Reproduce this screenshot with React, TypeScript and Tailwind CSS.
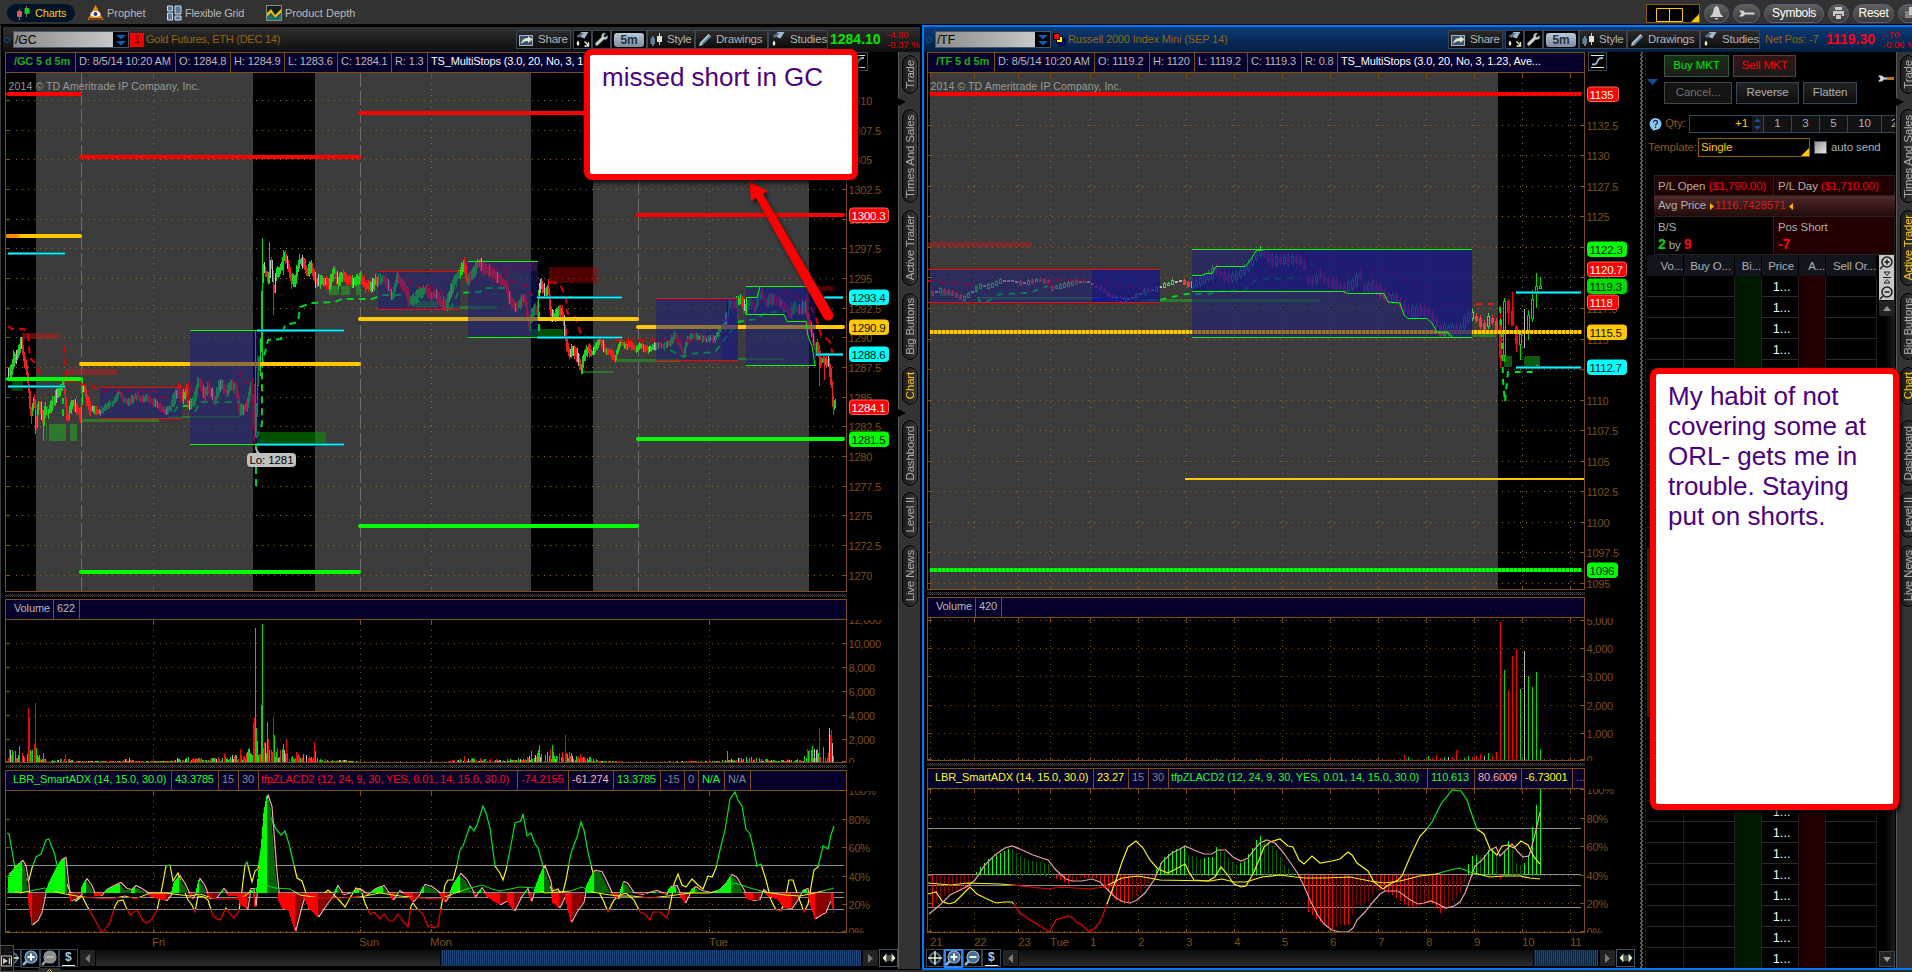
import type { ReactNode } from "react";

type Pt = [number, number];
type Seg = [number, number, number];

const GOLD = "#ffc800";
const AXIS = "#7d4f14";
const GREEN = "#00dc00";

/* ---------- helpers ---------- */

const rnd = (n: number) => {
    const v = Math.sin(n * 12.9898) * 43758.5453;
    return v - Math.floor(v);
};

const at = (pts: Pt[], x: number) => {
    if (x <= pts[0][0]) return pts[0][1];
    for (let i = 1; i < pts.length; i++) {
        if (x <= pts[i][0]) {
            const [x0, y0] = pts[i - 1];
            const [x1, y1] = pts[i];
            return y0 + ((y1 - y0) * (x - x0)) / (x1 - x0 || 1);
        }
    }
    return pts[pts.length - 1][1];
};

const line = (pts: Pt[]) => pts.map((p) => p.join(",")).join(" ");

const toPts = (s: string): Pt[] =>
    s.split(" ").map((p) => p.split(",").map(Number) as Pt);

const steps = (from: number, to: number, step: number) => {
    const out: number[] = [];
    for (let x = from; x <= to; x += step) out.push(x);
    return out;
};

/* ---------- gold chart data ---------- */

const GC_PRICE = toPts(
    "8,372 11,372 13,360 16,358 19,350 21,342 24,358 27,372 29,395 31,415 34,400 36,425 38,408 40,408 43,422 45,410 48,412 51,404 54,402 57,392 60,388 62,386 64,384 66,408 68,418 70,408 73,402 76,408 79,412 81,420 82,390 84,388 87,400 90,408 95,410 100,412 104,408 110,404 115,400 119,393 123,400 128,402 133,398 137,396 141,400 147,398 153,402 159,406 165,412 170,408 175,396 178,390 182,398 186,392 189,405 194,400 198,382 201,385 204,395 208,388 212,395 215,400 219,386 222,384 226,392 231,385 236,388 239,410 243,408 247,406 250,390 252,390 254,430 256,420 258,370 260,358 262,280 264,270 268,278 271,262 274,290 276,275 280,270 284,256 287,262 291,280 295,280 299,262 303,262 307,272 311,266 315,280 320,282 325,282 329,285 334,272 338,282 343,276 348,280 353,282 358,280 360,276 365,285 370,288 375,282 380,280 383,278 388,286 392,296 397,278 401,284 405,288 409,300 414,300 420,292 425,290 430,294 436,295 441,302 446,306 450,292 455,280 460,272 464,265 467,280 472,276 477,265 481,265 485,270 490,272 495,276 500,280 505,285 510,300 514,308 518,305 522,300 525,300 529,325 533,310 537,310 539,290 541,282 545,294 548,288 551,316 554,315 558,312 562,312 566,340 569,352 573,350 577,355 581,368 584,355 588,350 592,353 597,345 600,340 605,350 610,352 615,358 620,342 625,346 630,345 635,350 640,345 648,350 656,346 664,346 670,342 675,335 680,345 683,355 687,340 692,336 700,338 708,340 715,338 721,328 725,322 729,304 735,305 740,300 745,308 750,302 755,308 758,298 762,295 766,302 770,300 775,298 780,302 785,308 790,312 795,308 800,310 805,306 808,320 812,335 815,350 817,345 820,360 824,360 828,362 831,380 833,405 835,402"
);

const GC_ADX = toPts(
    "7,833 9,834 15,868 20,871 27,880 29,880 32,868 36,857 41,854 46,840 49,839 51,845 54,852 57,865 60,870 65,880 70,891 76,901 82,896 87,906 95,920 101,931 104,931 110,922 115,906 118,901 123,900 126,907 130,915 135,911 138,911 143,921 147,923 152,919 157,910 162,888 166,866 170,865 173,881 178,873 182,885 188,900 192,905 195,912 198,896 204,897 208,900 213,916 217,919 220,920 226,908 230,914 234,918 239,911 242,890 245,865 247,862 249,870 252,882 255,871 258,869 264,830 268,800 271,818 276,829 281,835 285,831 289,844 294,865 297,878 302,881 306,893 312,897 320,897 328,890 334,895 340,901 345,907 350,898 356,888 361,890 365,903 370,914 374,912 380,919 384,914 389,921 393,921 398,914 403,921 408,927 411,906 413,903 418,910 423,914 428,927 431,925 434,928 438,926 441,908 445,885 448,880 453,880 457,865 460,850 463,846 470,826 474,831 477,825 483,806 486,813 490,828 495,866 500,873 503,880 506,870 511,845 515,823 521,821 523,814 527,836 531,833 535,844 538,848 543,866 548,882 552,891 558,889 562,896 566,880 571,853 577,837 581,822 584,830 588,852 592,869 598,890 604,902 608,912 614,900 620,895 626,893 634,900 640,912 645,914 650,920 653,912 660,912 667,918 670,906 674,884 678,874 682,885 686,887 692,879 698,885 703,889 708,876 712,877 716,868 720,850 725,830 730,799 735,792 738,800 742,806 746,829 750,834 754,851 757,866 761,864 766,880 771,900 776,910 781,911 785,900 789,880 793,880 797,893 804,912 808,904 814,870 818,867 823,846 828,849 831,835 834,826"
);

const GC_HIST = toPts(
    "7,17 10,20 15,26 21,31 24,26 27,8 28,-10 31,-32 36,-28 40,-20 43,-6 44,0 50,14 56,26 60,32 64,34 67,6 68,-2 70,-8 75,-6 80,-2 81,6 85,13 90,6 94,-3 100,-3 105,2 112,6 119,9 125,3 130,2 134,6 140,3 146,0 150,-4 158,-6 165,-8 170,-2 173,10 178,16 183,8 188,-1 191,-6 195,0 198,13 203,6 208,-6 215,-5 222,3 228,-3 236,-3 240,-12 246,-16 249,3 252,3 254,-14 256,5 260,40 263,80 266,97 270,85 275,20 278,-8 282,-16 288,-18 294,-38 299,-18 303,-4 308,-16 317,-24 325,-12 332,-3 336,6 342,-2 350,0 358,3 366,-2 374,3 382,6 387,0 392,-7 398,1 404,-2 412,-9 418,-2 423,7 430,5 438,0 444,-9 448,-3 452,8 459,18 465,12 470,3 474,-4 480,4 486,-4 492,-8 499,-12 506,-8 513,-18 520,-4 526,3 530,-8 534,4 540,20 543,26 549,10 552,-10 558,-15 564,-3 570,-29 576,-18 582,-10 585,5 590,16 593,21 600,20 606,8 611,-2 617,-6 622,10 626,8 632,0 640,-2 655,1 665,-2 669,5 675,6 680,-4 684,-10 690,2 694,5 700,1 710,0 718,2 724,8 730,17 735,14 742,2 746,-6 752,-8 758,-7 762,2 768,-4 776,-6 783,-15 790,-16 797,-6 801,1 806,3 809,-10 814,-26 820,-22 824,-20 828,-10 830,-8 834,-24"
);

const GC_MID = toPts(
    "7,888 20,893 45,888 60,893 82,897 95,898 110,899 125,896 135,899 150,893 165,893 190,896 200,894 215,899 240,899 262,884 275,888 290,889 300,895 320,898 340,898 360,897 380,893 400,896 420,898 440,899 455,893 470,888 482,885 492,889 500,891 520,887 535,888 545,893 570,891 582,887 592,892 610,895 620,896 632,896 650,898 668,896 690,893 710,893 722,889 735,883 750,888 765,892 785,895 800,896 815,893 834,888"
);

const GC_VOL_BASE = toPts(
    "8,9 20,9 30,10 40,5 48,1 65,3 75,1 120,1 128,3 135,1 170,1 176,3 195,4 205,2 225,5 240,5 250,12 258,20 268,18 280,12 290,8 300,6 312,5 325,2 345,2 360,0 445,0 455,2 470,3 500,2 525,3 535,9 550,9 568,9 575,4 590,4 600,1 640,0 720,1 735,3 755,4 770,2 800,2 808,9 820,10 834,8"
);

// x, top y, colour
const GC_VOL_SPIKES: [number, number, string][] = [
    [9, 749, "#f00"], [19, 746, GREEN], [28, 708, "#f00"], [29, 717, "#f00"], [34, 744, "#f00"], [35, 703, "#f00"],
    [36, 748, GREEN], [43, 753, GREEN], [65, 754, "#f00"], [224, 753, "#f00"], [240, 749, "#f00"], [249, 748, GREEN],
    [253, 722, "#f00"], [254, 718, "#f00"], [255, 628, GREEN], [256, 728, GREEN], [261, 705, GREEN], [262, 624, GREEN],
    [264, 742, "#f00"], [267, 722, GREEN], [268, 740, "#f00"], [273, 717, "#f00"], [274, 735, GREEN], [283, 744, GREEN],
    [286, 740, "#f00"], [296, 752, "#f00"], [314, 742, "#f00"], [315, 751, GREEN], [464, 756, "#f00"], [531, 751, GREEN],
    [539, 745, GREEN], [550, 749, "#f00"], [552, 745, GREEN], [565, 735, "#f00"], [580, 754, "#f00"], [727, 751, GREEN],
    [807, 749, "#f00"], [812, 746, GREEN], [814, 749, "#bbb"], [819, 728, "#f00"], [823, 747, GREEN], [829, 728, "#bbb"],
    [830, 735, "#f00"], [831, 730, "#f00"], [832, 743, "#bbb"],
];

const GC_LEVELS: [string, Seg[]][] = [
    ["#ff0000", [[8, 80, 94], [81, 359, 157], [360, 640, 113], [638, 843, 215]]],
    [GOLD, [[8, 80, 236], [81, 359, 364], [360, 637, 319], [638, 843, 327]]],
    ["#00ff00", [[8, 80, 379], [81, 359, 572], [360, 637, 526], [638, 843, 439]]],
];

const GC_CYAN: Seg[] = [
    [8, 65, 253.5], [8, 65, 386.5], [257, 344, 330.5], [257, 344, 444.5], [537, 622, 297.5], [537, 622, 337.5],
    [824, 843, 297.5], [816, 843, 354.5],
];

// x, y, width, height, outline
const GC_BOXES: [number, number, number, number, string][] = [
    [100, 387, 82, 31, "#f00"], [190, 330, 70, 114, "#0f0"], [378, 271, 82, 38, "#f00"], [468, 261, 70, 76, "#0f0"],
    [656, 298, 82, 62, "#f00"], [746, 286, 70, 79, "#0f0"],
];

const GC_ZONES: [number, number, number, number, string][] = [
    [22, 333, 37, 6, "#b91e1e"], [67, 369, 50, 6, "#b91e1e"], [182, 387, 14, 6, "#b91e1e"], [463, 261, 74, 10, "#7a1e3c"],
    [549, 267, 48, 16, "#a00000"], [811, 286, 22, 5, "#a00000"], [12, 381, 11, 10, "#108c10"], [46, 424, 1, 17, "#1eb41e"],
    [49, 424, 17, 17, "#1eb41e"], [70, 424, 7, 17, "#1eb41e"], [82, 419, 77, 3, "#1eb41e"], [168, 416, 71, 2, "#1eb41e"],
    [257, 432, 69, 12, "#00a000"], [329, 286, 10, 9, "#1eb41e"], [341, 286, 9, 9, "#1eb41e"], [356, 286, 5, 9, "#1eb41e"],
    [413, 301, 25, 7, "#1eb41e"], [448, 306, 48, 3, "#1eb41e"], [531, 329, 32, 9, "#00a000"], [581, 371, 32, 2, "#1eb41e"],
    [615, 359, 65, 3, "#1eb41e"], [738, 358, 46, 2, "#1eb41e"],
];

const GC_STOPS: [string, string][] = [
    ["#e00000", "8,326 12,329 24,329 28,333 30,358 35,363 42,377"],
    ["#e00000", "65,346 66,380 80,384 92,386 100,390 155,391 162,397 172,398"],
    ["#e00000", "188,382 188,400"],
    ["#e00000", "239,370 242,380 252,385 254,440"],
    ["#e00000", "409,279 411,286 430,287 440,290 444,297"],
    ["#e00000", "505,270 508,280 525,285 532,296"],
    ["#e00000", "550,282 560,284 566,298 567,313 576,318 581,335"],
    ["#e00000", "614,340 650,340 702,341"],
    ["#e00000", "785,289 788,296 805,297 815,315 821,335 830,342 834,360"],
    ["#00d228", "63,416 63,398"],
    ["#00d228", "174,412 178,406 188,406"],
    ["#00d228", "195,412 200,402 240,402"],
    ["#00d228", "256,486 256,438 262,424 262,365 268,340 281,339 285,325 298,322 300,307 312,303 335,302 342,299 372,299 383,295 405,295"],
    ["#00d228", "450,310 458,293 480,292 485,288 505,288"],
    ["#00d228", "539,331 539,306"],
    ["#00d228", "670,350 684,357 690,354 715,352 727,336 738,322 757,319 765,313 787,311"],
];

/* ---------- russell chart data ---------- */

const TF_PRICE = toPts(
    "932,293 941,290 950,292 958,296 965,298 972,292 980,286 990,286 1000,281 1013,281 1022,283 1036,280 1048,281 1052,288 1062,286 1072,283 1085,281 1095,285 1104,290 1112,297 1125,300 1135,297 1146,290 1155,290 1164,285 1172,282 1182,281 1188,284 1194,284 1202,280 1210,275 1216,270 1222,275 1230,278 1238,275 1246,268 1254,260 1260,252 1265,255 1272,260 1282,260 1298,259 1304,265 1308,280 1314,282 1320,274 1326,282 1335,284 1345,288 1352,284 1360,275 1364,288 1372,286 1380,290 1388,297 1396,298 1404,308 1410,311 1422,310 1428,312 1434,320 1440,330 1448,330 1460,329 1466,318 1472,315 1478,320 1484,327 1490,318 1496,325"
);

// x, high, low, body top, body bottom, colour
const TF_OPEN: [number, number, number, number, number, string][] = [
    [1500, 306, 368, 320, 357, "#f00"], [1504, 298, 362, 301, 355, GREEN], [1508, 299, 325, 301, 312, "#f00"],
    [1512, 292, 326, 310, 325, "#f00"], [1516, 325, 352, 326, 343, "#f00"], [1520, 334, 360, 334, 344, GREEN],
    [1524, 309, 348, 0, 0, "#bbb"], [1528, 310, 340, 315, 332, GREEN], [1532, 290, 322, 299, 318, GREEN],
    [1536, 273, 308, 286, 291, GREEN], [1540, 277, 288, 286, 288, GREEN],
];

const TF_UPPER = "1192,275.5 1202,275.5 1206,273.5 1212,273.5 1216,266.5 1245,266.5 1250,261 1256,251 1265,249.5 1472,249.5";
const TF_LOWER = "1192,291.5 1344,291.5 1348,293.5 1384,293.5 1388,302 1400,303 1404,315 1408,318.5 1427,318.5 1432,323 1437,332 1448,332 1452,337";

const TF_STOPS: [string, string][] = [
    ["#e00000", "928,281 940,282 952,283 970,285"],
    ["#e00000", "1048,287 1052,280 1075,280 1098,281 1110,284 1128,286 1143,289"],
    ["#a00046", "1304,275 1307,258 1335,258 1345,268 1380,269 1400,275 1406,282 1422,284 1434,290 1438,304 1472,304"],
    ["#f01414", "1476,304 1498,304"],
    ["#00d228", "976,285 979,301 988,301 1000,294 1030,293 1042,288 1048,286"],
    ["#00d228", "1144,290 1148,301 1160,300 1172,297 1186,294 1208,294 1222,291 1245,290 1257,279 1300,278"],
    ["#00e61e", "1500,307 1502,340 1503,380 1505,402 1508,372 1532,372 1538,365"],
];

const TF_HIST = toPts(
    "932,-32 948,-18 968,-15 972,-3 980,8 990,17 1000,22 1008,26 1014,25 1018,19 1030,14 1048,11 1052,2 1056,-4 1068,-9 1080,-3 1096,-3 1104,-12 1110,-20 1118,-27 1128,-28 1138,-20 1150,-6 1156,6 1164,18 1172,24 1184,28 1188,20 1200,16 1212,18 1216,28 1224,23 1230,14 1236,10 1244,14 1252,27 1256,35 1260,39 1268,32 1276,25 1284,10 1292,3 1298,-1 1304,-14 1308,-37 1316,-44 1324,-50 1332,-54 1340,-50 1348,-50 1356,-31 1366,-29 1376,-14 1384,-16 1394,-22 1404,-30 1412,-33 1422,-31 1430,-27 1440,-38 1448,-32 1460,-18 1464,-8 1467,8 1472,19 1476,20 1482,17 1488,25 1492,26 1496,20 1500,-4 1504,24 1508,34 1512,26 1516,12 1522,8 1528,20 1532,48 1536,70 1540,86"
);

const TF_PINK =
    "929,914 940,905 950,895 960,890 968,886 975,880 985,865 995,855 1005,848 1012,846 1020,849 1033,855 1048,860 1056,870 1066,879 1072,881 1082,881 1092,879 1100,882 1108,890 1116,898 1124,902 1130,903 1137,900 1145,893 1154,880 1162,862 1172,853 1180,849 1185,846 1194,850 1204,854 1212,854 1218,850 1226,850 1233,857 1241,861 1248,858 1254,850 1260,843 1267,840 1275,843 1283,852 1290,862 1298,874 1304,886 1310,900 1317,914 1324,924 1332,930 1340,932 1348,932 1353,928 1357,920 1365,912 1373,902 1380,894 1385,891 1398,891 1405,896 1412,901 1418,904 1424,903 1431,901 1438,904 1446,908 1454,906 1460,902 1465,893 1470,880 1475,866 1482,860 1490,850 1496,847 1500,856 1506,850 1512,844 1518,852 1523,857 1529,856 1533,842 1537,826 1540,812";

const TF_ADX =
    "928,894 936,892 942,901 949,904 955,902 962,895 970,887 977,894 985,898 996,903 1004,902 1012,902 1020,913 1030,920 1040,926 1049,932 1056,920 1068,916 1073,918 1077,923 1081,924 1089,932 1095,928 1100,922 1104,912 1110,896 1116,880 1122,862 1128,847 1136,841 1143,848 1150,860 1158,869 1168,873 1176,869 1185,864 1189,872 1194,880 1208,881 1215,877 1221,867 1227,874 1234,884 1241,887 1246,886 1253,874 1259,860 1264,847 1270,842 1280,839 1288,846 1293,847 1299,860 1304,864 1312,856 1320,863 1332,861 1340,859 1348,852 1352,855 1357,863 1368,871 1374,882 1383,889 1390,884 1398,880 1402,876 1410,857 1420,836 1426,830 1432,822 1441,804 1452,790 1461,791 1467,800 1472,815 1477,829 1484,834 1490,849 1497,855 1502,846 1508,845 1514,848 1521,841 1528,845 1534,857 1540,864";

const TF_MID =
    "928,883 950,885 968,883 1000,884 1012,885 1030,887 1048,889 1060,887 1090,889 1104,887 1112,883 1122,878 1138,876 1160,880 1210,881 1222,879 1234,882 1246,882 1262,877 1280,875 1295,877 1305,878 1325,878 1350,877 1370,881 1384,883 1400,881 1420,876 1436,874 1450,870 1460,868 1470,872 1478,874 1490,877 1504,876 1520,876 1530,878 1540,879";

const TF_VOLUME: [number, number, string][] = [
    [964, 759, GREEN], [1124, 759, "#f00"], [1216, 759, GREEN], [1256, 759, GREEN], [1260, 759, "#f00"], [1308, 759, "#f00"],
    [1340, 759, "#f00"], [1388, 759, "#f00"], [1404, 755, "#f00"], [1408, 757, GREEN], [1428, 756, GREEN], [1432, 758, "#f00"],
    [1436, 755, "#f00"], [1440, 758, "#f00"], [1444, 757, GREEN], [1448, 757, "#bbb"], [1452, 757, "#f00"], [1456, 750, "#f00"],
    [1464, 758, GREEN], [1468, 756, GREEN], [1472, 757, "#f00"], [1476, 756, "#f00"], [1480, 754, "#f00"], [1484, 756, "#bbb"],
    [1488, 753, GREEN], [1492, 756, "#f00"], [1496, 752, "#f00"], [1500, 622, "#f00"], [1504, 670, GREEN], [1508, 690, "#f00"],
    [1512, 656, "#f00"], [1516, 649, "#f00"], [1520, 689, GREEN], [1524, 651, "#bbb"], [1528, 676, GREEN], [1532, 687, GREEN],
    [1536, 672, GREEN], [1540, 749, GREEN],
];

/* ---------- generated shapes ---------- */

const buildCandles = () => {
    const out = { up: "", down: "", flat: "" };
    for (let x = 8; x <= 835; x++) {
        const mid = at(GC_PRICE, x);
        const slope = at(GC_PRICE, x + 1) - at(GC_PRICE, x - 1);
        const calm = (x > 590 && x < 725) || (x > 90 && x < 172) ? 3 : 5;
        const top = mid - calm * (0.4 + rnd(x) * 1.1) - Math.max(0, Math.abs(slope) / 3);
        const bot = mid + calm * (0.4 + rnd(x + 500) * 1.1) + Math.max(0, Math.abs(slope) / 3);
        const kind = rnd(x + 900);
        const d = `M${x + 0.5} ${top.toFixed(1)}V${bot.toFixed(1)}`;
        if (kind > 0.92) out.flat += d;
        else if (slope + (kind - 0.46) * 5 > 0) out.down += d;
        else out.up += d;
    }
    return out;
};

const buildVolume = () => {
    const out = { up: "", down: "", flat: "" };
    for (let x = 8; x <= 833; x++) {
        const h = Math.round(at(GC_VOL_BASE, x) * (0.3 + rnd(x * 3) * 1.1));
        if (h < 1 || rnd(x + 77) < 0.22) continue;
        const d = `M${x + 0.5} 762V${762 - h}`;
        const kind = rnd(x + 31);
        if (kind > 0.9) out.flat += d;
        else if (kind > 0.45) out.down += d;
        else out.up += d;
    }
    return out;
};

const buildHistogram = (pts: Pt[], xs: number[], base: number) => {
    const out = { up: "", upFade: "", down: "", downFade: "" };
    xs.forEach((x) => {
        const h = at(pts, x);
        const prev = at(pts, x - (xs[1] - xs[0]));
        const d = `M${x + 0.5} ${base}V${(base - h).toFixed(1)}`;
        if (h >= 0) {
            if (h >= prev) out.up += d;
            else out.upFade += d;
        } else if (h <= prev) out.down += d;
        else out.downFade += d;
    });
    return out;
};

const gcCandles = buildCandles();
const gcVolume = buildVolume();
const gcHist = buildHistogram(GC_HIST, steps(8, 833, 1), 892.5);
const tfHist = buildHistogram(TF_HIST, steps(932, 1540, 4), 874.5);

/* ---------- chart building blocks ---------- */

interface PaneProps {
    x: number;
    y: number;
    w: number;
    h: number;
    right: number;
    cols: number[];
    rows: [number, string][];
    backdrop?: ReactNode;
    children?: ReactNode;
    gridColor?: string;
}

function Pane({ x, y, w, h, right, cols, rows, backdrop, children, gridColor = "#77521f" }: PaneProps) {
    const bottom = y + h - 0.5;
    return (
        <svg className="block shrink-0" width={w} height={h} viewBox={`${x} ${y} ${w} ${h}`}>
            {backdrop}
            <g stroke={gridColor} strokeWidth="1" strokeDasharray="1 5" shapeRendering="crispEdges">
                {rows.map(([ry]) => (
                    <line key={ry} x1={x + 11} x2={right - 8} y1={ry + 0.5} y2={ry + 0.5} />
                ))}
                {cols.map((cx) => (
                    <line key={cx} y1={y + 4} y2={bottom} x1={cx + 0.5} x2={cx + 0.5} />
                ))}
            </g>
            <g stroke={AXIS} shapeRendering="crispEdges">
                {cols.map((cx) => (
                    <path key={cx} d={`M${cx + 0.5} ${y}v5M${cx + 0.5} ${bottom}v-4`} />
                ))}
            </g>
            {children}
            <g stroke={AXIS} fill="none" shapeRendering="crispEdges">
                <path d={`M${x + 0.5} ${y}V${bottom}H${right + 0.5}V${y}`} />
                {rows.map(([ry]) => (
                    <path key={ry} d={`M${x} ${ry + 0.5}h5M${right} ${ry + 0.5}h-4`} />
                ))}
            </g>
            <g fill={AXIS} fontSize="11" letterSpacing="-0.2">
                {rows.map(([ry, label]) => (
                    <text key={ry} x={right + 2.5} y={ry + 5}>
                        {label}
                    </text>
                ))}
            </g>
        </svg>
    );
}

function Tag({ x, y, label, fill, light = false, w = 40 }: { x: number; y: number; label: string; fill: string; light?: boolean; w?: number }) {
    return (
        <g>
            <rect x={x + 0.5} y={y - 7} width={w - 1} height={14.5} rx="3" fill={fill} stroke={light ? "#ff6464" : fill} strokeWidth="1" />
            <text x={x + 2.5} y={y + 4.5} fontSize="11.5" letterSpacing="-0.2" fill={light ? "#fff" : "#001400"}>
                {label}
            </text>
        </g>
    );
}

function Bars({ set }: { set: { up: string; down: string; flat: string } }) {
    return (
        <g shapeRendering="crispEdges" strokeWidth="1">
            <path d={set.down} stroke="#f51e1e" />
            <path d={set.up} stroke="#1ed21e" />
            <path d={set.flat} stroke="#bebebe" />
        </g>
    );
}

function Histogram({ set }: { set: { up: string; upFade: string; down: string; downFade: string } }) {
    return (
        <g shapeRendering="crispEdges" strokeWidth="1">
            <path d={set.up} stroke="#00ff00" />
            <path d={set.upFade} stroke="#006400" />
            <path d={set.down} stroke="#ff0000" />
            <path d={set.downFade} stroke="#8c0000" />
        </g>
    );
}

// vertical three-band stroke: green on top, yellow between, red below
function Bands({ id, from, to, a, b }: { id: string; from: number; to: number; a: number; b: number }) {
    const p = (v: number) => (v - from) / (to - from);
    return (
        <linearGradient id={id} gradientUnits="userSpaceOnUse" x1="0" x2="0" y1={from} y2={to}>
            <stop offset={p(a)} stopColor="#00e61e" />
            <stop offset={p(a)} stopColor="#f5f514" />
            <stop offset={p(b)} stopColor="#f5f514" />
            <stop offset={p(b)} stopColor="#eb0000" />
        </linearGradient>
    );
}

function Splitter({ className }: { className: string }) {
    return (
        <div className={`flex shrink-0 items-center ${className}`}>
            <div className="h-[3px] w-full bg-[repeating-conic-gradient(#484848_0_25%,#000_0_50%)] bg-[length:2px_2px]" />
        </div>
    );
}

type Cell = [number, string, string];

function InfoRow({ cells, className }: { cells: Cell[]; className: string }) {
    return (
        <div className={`flex h-[21px] shrink-0 overflow-hidden border border-[#7d4f14] bg-[#06002d] text-[11px] leading-[16px] tracking-[-0.13px] ${className}`}>
            {cells.map(([w, text, cls], i) => (
                <div key={i} style={{ width: w }} className={`shrink-0 overflow-hidden whitespace-nowrap border-r border-[#7d4f14] pl-[3px] ${cls}`}>
                    {text}
                </div>
            ))}
        </div>
    );
}

/* ---------- gold panes ---------- */

const GC_ROWS: [number, string][] = [
    [100, "1310"], [130, "1307.5"], [159, "1305"], [189, "1302.5"], [219, "1300"], [248, "1297.5"], [278, "1295"],
    [308, "1292.5"], [337, "1290"], [367, "1287.5"], [397, "1285"], [426, "1282.5"], [456, "1280"], [486, "1277.5"],
    [515, "1275"], [545, "1272.5"], [575, "1270"],
];

function Copyright({ x }: { x: number }) {
    return (
        <text x={x} y="89.5" fontSize="10.5" letterSpacing="0.12" fill="#9b9b9b">
            2014 © TD Ameritrade IP Company, Inc.
        </text>
    );
}

function GoldPrice() {
    return (
        <Pane
            x={5}
            y={73}
            w={893}
            h={519}
            right={846}
            cols={[153, 431, 709]}
            rows={GC_ROWS}
            gridColor="#8a6a3a"
            backdrop={
                <g shapeRendering="crispEdges">
                    <rect x="36" y="73" width="773" height="519" fill="#3c3c3c" />
                    <rect x="253" y="73" width="62" height="519" fill="#000" />
                    <rect x="531" y="73" width="62" height="519" fill="#000" />
                    <path d="M81.5 73V592M360.5 73V592M638.5 73V592" stroke="#6e6e6e" strokeDasharray="14 4" />
                </g>
            }
        >
            <Copyright x={8.5} />
            {GC_ZONES.map(([x, y, w, h, c], i) => (
                <rect key={i} x={x} y={y} width={w} height={h} fill={c} opacity="0.5" />
            ))}
            <Bars set={gcCandles} />
            <path d="M262.5 238V365M269.5 242V270M283.5 250V275M255.5 331V436M43.5 410V441M35.5 410V434M737.5 300V320" stroke={GREEN} />
            <path d="M273.5 270V315M254.5 384V443M257.5 355V385M819.5 345V386M824.5 355V380M239.5 395V419" stroke="#e61e1e" />
            {GC_STOPS.map(([c, pts], i) => (
                <polyline key={i} points={pts} fill="none" stroke={c} strokeWidth="2" strokeDasharray="7 5" />
            ))}
            {GC_LEVELS.map(([c, segs]) => (
                <g key={c} stroke={c} strokeWidth="4" strokeLinecap="round">
                    {segs.map(([a, b, y]) => (
                        <line key={a} x1={a} x2={b} y1={y} y2={y} />
                    ))}
                </g>
            ))}
            <line x1="7" x2="19" y1="236" y2="236" stroke="#ff8c00" strokeWidth="4" />
            {GC_BOXES.map(([x, y, w, h, c], i) => (
                <g key={i} shapeRendering="crispEdges">
                    <rect x={x} y={y} width={w} height={h} fill="#1a1a82" opacity="0.48" />
                    <path d={`M${x} ${y + 0.5}h${w}M${x} ${y + h + 0.5}h${w}`} stroke={c} />
                </g>
            ))}
            <rect x="721" y="324" width="17" height="36" fill="#10108c" opacity="0.35" />
            <rect x="727" y="299" width="11" height="25" fill="#10108c" opacity="0.35" />
            <polyline points="721,324 724,322 727,320 728,299" fill="none" stroke="#0000dc" />
            <polygon points="746,298 757,298 760,287 806,287 806,320 786,320 784,314 746,314" fill="#10108c" opacity="0.35" />
            <polyline points="746.5,314 746.5,297.5 757,297.5 760,286.5" fill="none" stroke="#0f0" />
            <polyline points="746,314.5 784,314.5 787,321.5 806,321.5 808,336 812,346 815,365" fill="none" stroke="#0f0" />
            <path d="M255.5 331V437" stroke="#149614" />
            {GC_CYAN.map(([a, b, y], i) => (
                <g key={i}>
                    <line x1={a} x2={b} y1={y} y2={y} stroke="#008c96" strokeWidth="3" />
                    <line x1={a} x2={b} y1={y} y2={y} stroke="#14f0ff" strokeWidth="1.2" />
                </g>
            ))}
            <path d="M255 446l6 9h-4z" fill="#c0c0c0" />
            <rect x="247" y="453" width="49" height="14" rx="4" fill="#c0c0c0" />
            <text x="249.5" y="464" fontSize="11.5" letterSpacing="-0.1" fill="#000">
                Lo: 1281
            </text>
        </Pane>
    );
}

function GoldTags() {
    const tags: [number, string, string, boolean][] = [
        [215, "1300.3", "#ff0000", true], [297, "1293.4", "#00ffff", false], [327, "1290.9", GOLD, false],
        [354, "1288.6", "#00ffff", false], [407, "1284.1", "#ff0000", true], [439, "1281.5", "#00ff00", false],
    ];
    return (
        <svg className="absolute top-0 left-[844px] block" width="46" height="519" viewBox="849 73 46 519">
            {tags.map(([y, label, fill, light]) => (
                <Tag key={label} x={849} y={y} label={label} fill={fill} light={light} />
            ))}
        </svg>
    );
}

function GoldVolume() {
    return (
        <Pane
            x={5}
            y={620}
            w={893}
            h={143}
            right={846}
            cols={[153, 360, 431, 709]}
            rows={[[619, "12,000"], [643, "10,000"], [667, "8,000"], [691, "6,000"], [715, "4,000"], [739, "2,000"], [761, "0"]]}
        >
            <Bars set={gcVolume} />
            <g shapeRendering="crispEdges">
                {GC_VOL_SPIKES.map(([x, y, c]) => (
                    <path key={x} d={`M${x + 0.5} 762V${y}`} stroke={c} />
                ))}
            </g>
        </Pane>
    );
}

function GoldStudy() {
    const trail = GC_HIST.map(([x, h]) => [x + 2, 892 - h - (h > 0 ? 0.5 : -0.5)] as Pt).filter((p) => p[0] < 834);
    return (
        <Pane
            x={5}
            y={791}
            w={893}
            h={142}
            right={846}
            cols={[153, 360, 431, 709]}
            rows={[[790, "100%"], [819, "80%"], [847, "60%"], [876, "40%"], [904, "20%"], [931, "0%"]]}
        >
            <defs>
                <Bands id="gcAdx" from={791} to={932} a={866} b={909} />
                <Bands id="gcMid" from={880} to={900} a={891.5} b={897.2} />
            </defs>
            <path d="M7 865.5H844M7 892.5H844M7 897.5H844M7 909.5H844" stroke="#8c8c8c" shapeRendering="crispEdges" />
            <polyline points={line(GC_ADX)} fill="none" stroke="url(#gcAdx)" strokeWidth="1.2" />
            <polyline points={line(trail)} fill="none" stroke="#f5aaaa" strokeWidth="1.2" />
            <Histogram set={gcHist} />
            <polyline points={line(GC_MID)} fill="none" stroke="url(#gcMid)" strokeWidth="1" />
        </Pane>
    );
}

/* ---------- russell panes ---------- */

const TF_COLS = [930, 974, 1018, 1050, 1090, 1138, 1186, 1234, 1282, 1330, 1378, 1426, 1474, 1522, 1570];

const TF_ROWS: [number, string][] = [
    [125, "1132.5"], [155, "1130"], [186, "1127.5"], [216, "1125"], [247, ""], [277, "1120"], [308, "1117.5"], [339, "1115"],
    [369, ""], [400, "1110"], [430, "1107.5"], [461, "1105"], [491, "1102.5"], [522, "1100"], [552, "1097.5"], [583, "1095"],
];

function RussellPrice() {
    return (
        <Pane
            x={927}
            y={73}
            w={708}
            h={517}
            right={1584}
            cols={TF_COLS}
            rows={TF_ROWS}
            gridColor="#8a6a3a"
            backdrop={<rect x="930" y="73" width="568" height="517" fill="#3c3c3c" />}
        >
            <Copyright x={930.5} />
            <rect x="928" y="242" width="104" height="5" fill="#b91e1e" opacity="0.5" />
            <g fill="#1eb41e" opacity="0.5">
                <rect x="940" y="293" width="12" height="3" />
                <rect x="979" y="297" width="121" height="2" />
                <rect x="1140" y="299" width="180" height="3" />
                <rect x="1448" y="330" width="48" height="7" />
                <rect x="1504" y="356" width="8" height="11" />
                <rect x="1524" y="356" width="16" height="11" />
            </g>
            <g shapeRendering="crispEdges">
                {steps(932, 1496, 4).map((x) => {
                    const y = Math.round(at(TF_PRICE, x));
                    const slope = at(TF_PRICE, x + 3) - at(TF_PRICE, x - 3);
                    const k = rnd(x);
                    const quiet = x < 1190;
                    const half = quiet ? 1 + Math.round(k) : 2 + Math.round(k * 3);
                    const wick = half + (quiet ? 1 : 3);
                    if (k < 0.4 && quiet) return <rect key={x} x={x - 1} y={y - 1} width="3" height="2" fill="#b4b4b4" />;
                    const up = slope + (rnd(x + 9) - 0.5) * 4 < 0;
                    return (
                        <g key={x}>
                            <path d={`M${x + 0.5} ${y - wick}V${y + wick}`} stroke={up ? "#3cdc3c" : "#f03c3c"} />
                            <rect x={x - 0.5} y={y - half + 0.5} width="2" height={half * 2} fill={up ? "#3c3c3c" : "#f03c3c"} stroke={up ? "#3cdc3c" : "#f03c3c"} />
                        </g>
                    );
                })}
                {TF_OPEN.map(([x, hi, lo, top, bot, c]) => (
                    <g key={x}>
                        <path d={`M${x + 0.5} ${hi}V${lo}`} stroke={c} />
                        {bot > 0 && <rect x={x - 0.5} y={top + 0.5} width="2" height={bot - top} fill={c === "#f00" ? c : "#000"} stroke={c} />}
                    </g>
                ))}
            </g>
            {TF_STOPS.map(([c, pts], i) => (
                <polyline key={i} points={pts} fill="none" stroke={c} strokeWidth="2" strokeDasharray="6 6" />
            ))}
            <line x1="930" x2="1582" y1="94" y2="94" stroke="#b40000" strokeWidth="3" />
            <line x1="930" x2="1582" y1="94" y2="94" stroke="#ff0000" strokeWidth="4" strokeDasharray="3 1" />
            <line x1="930" x2="1582" y1="332" y2="332" stroke="#b48c00" strokeWidth="3" />
            <line x1="930" x2="1582" y1="332" y2="332" stroke={GOLD} strokeWidth="4" strokeDasharray="3 1" />
            <line x1="930" x2="1582" y1="570" y2="570" stroke="#00a000" strokeWidth="3" />
            <line x1="930" x2="1582" y1="570" y2="570" stroke="#00ff00" strokeWidth="4" strokeDasharray="3 1" />
            <line x1="1185" x2="1584" y1="479" y2="479" stroke={GOLD} strokeWidth="2" />
            <rect x="930" y="269" width="230" height="33" fill="#1a1a82" opacity="0.48" />
            <rect x="1092" y="270" width="68" height="32" fill="#10108c" opacity="0.5" />
            <polyline points="1092,299.5 1121,299.5 1125,302" fill="none" stroke="#0000dc" />
            <path d="M928 269.5H1160M928 302.5H1160" stroke="#ff0000" />
            <rect x="1192" y="249" width="280" height="88" fill="#1a1a82" opacity="0.48" />
            <polygon points={`${TF_UPPER} 1472,337 ${TF_LOWER.split(" ").reverse().join(" ")}`} fill="#10108c" opacity="0.5" />
            <path d="M1192 249.5H1472M1192 337.5H1472" stroke="#1ef01e" />
            <polyline points={TF_UPPER} fill="none" stroke="#0f0" />
            <polyline points={TF_LOWER} fill="none" stroke="#0f0" />
            {[292.5, 367.5].map((y) => (
                <g key={y}>
                    <line x1="1516" x2="1581" y1={y} y2={y} stroke="#008c96" strokeWidth="3" />
                    <line x1="1516" x2="1581" y1={y} y2={y} stroke="#14f0ff" strokeWidth="1.2" />
                </g>
            ))}
        </Pane>
    );
}

function RussellTags() {
    const tags: [number, string, string, boolean, number][] = [
        [94, "1135", "#ff0000", true, 32], [249, "1122.3", "#00ff00", false, 40], [269, "1120.7", "#ff0000", true, 40],
        [286, "1119.3", "#00dc00", false, 40], [302, "1118", "#ff0000", true, 32], [332, "1115.5", GOLD, false, 40],
        [367, "1112.7", "#00ffff", false, 40], [570, "1096", "#00ff00", false, 31],
    ];
    return (
        <svg className="absolute top-0 left-[660px] block" width="46" height="517" viewBox="1587 73 46 517">
            {tags.map(([y, label, fill, light, w]) => (
                <Tag key={label} x={1587} y={y} label={label} fill={fill} light={light} w={w} />
            ))}
        </svg>
    );
}

function RussellVolume() {
    return (
        <Pane
            x={927}
            y={618}
            w={708}
            h={143}
            right={1584}
            cols={TF_COLS}
            rows={[[620, "5,000"], [648, "4,000"], [676, "3,000"], [705, "2,000"], [733, "1,000"], [759, "0"]]}
        >
            <g shapeRendering="crispEdges">
                {TF_VOLUME.map(([x, y, c]) => (
                    <path key={x} d={`M${x + 0.5} 760V${y}`} stroke={c} />
                ))}
            </g>
        </Pane>
    );
}

function RussellStudy() {
    return (
        <Pane
            x={927}
            y={789}
            w={708}
            h={144}
            right={1584}
            cols={TF_COLS}
            rows={[[789, "100%"], [818, "80%"], [846, "60%"], [875, "40%"], [903, "20%"], [931, "0%"]]}
        >
            <defs>
                <Bands id="tfAdx" from={789} to={932} a={829} b={904.5} />
                <Bands id="tfMid" from={860} to={890} a={873.5} b={885.3} />
            </defs>
            <path d="M928 828.5H1581M928 874.5H1581M928 885.5H1581M928 907.5H1581" stroke="#8c8c8c" shapeRendering="crispEdges" />
            <Histogram set={tfHist} />
            <polyline points={TF_ADX} fill="none" stroke="url(#tfAdx)" strokeWidth="1.2" />
            <polyline points={TF_PINK} fill="none" stroke="#eba0a0" strokeWidth="1.2" />
            <polyline points={TF_MID} fill="none" stroke="url(#tfMid)" strokeWidth="1.2" />
        </Pane>
    );
}

/* ---------- icons ---------- */

const Share = () => (
    <svg className="shrink-0" width="15" height="13" viewBox="0 0 15 13">
        <rect x="0.5" y="2.5" width="13" height="10" fill="#3c5064" stroke="#a0b4c8" />
        <path d="M2 11c1-5 4-6 7-6V3l4.5 3.5L9 10V8C6 8 4 9 2 11z" fill="#dce6d2" />
    </svg>
);

const Pour = ({ arrow = false }: { arrow?: boolean }) => (
    <svg className="shrink-0" width="15" height="15" viewBox="0 0 15 15">
        <path d="M6 0h7.500L9.500 6.500 5.500 5z" fill="#a0b9cd" />
        <path d="M1.500 4l5-3.500 2 1L4 6z" fill="#506e82" />
        <path d="M3 8.500c2 2.500 1.500 5 0 5s-2-2.500 0-5z" fill="#e6f0d2" />
        {arrow && <path d="M9.500 9.500l4 4M13.500 10v4h-4" stroke="#e6f0d2" strokeWidth="1.300" fill="none" />}
    </svg>
);

const Wrench = () => (
    <svg className="shrink-0" width="15" height="15" viewBox="0 0 15 15">
        <path d="M13.500 3.500L11 5.500 9.500 4 11.500 1.200C9 .5 7 2.500 7.500 5.200L1.500 11c-1 1.500.8 3.400 2.300 2.300l6-5.800c2.800.5 4.700-1.500 3.700-4z" fill="#c8d7cd" stroke="#5a6e7d" strokeWidth=".5" />
    </svg>
);

const StyleIcon = () => (
    <svg className="shrink-0" width="13" height="14" viewBox="0 0 13 14">
        <path d="M3 3v10M9.500 0v12" stroke="#c8d2c8" />
        <rect x="0.500" y="5" width="4.500" height="6" fill="#5f829b" />
        <rect x="7" y="3" width="5" height="6" fill="#dce6cd" />
    </svg>
);

const Pencil = () => (
    <svg className="shrink-0" width="14" height="14" viewBox="0 0 14 14">
        <path d="M2 9.500L10.500 1l2.500 2.500L4.500 12 1 13z" fill="#b4cdd7" />
        <path d="M4.500 12L13 3.500 11.800 2.300 3.200 10.800z" fill="#5f8296" />
    </svg>
);

const Fit = () => (
    <svg width="14" height="12" viewBox="0 0 14 12">
        <path d="M4.500 1.500v9L.5 6zM9.500 1.500v9l4-4.500z" fill="#e6f0d2" />
        <path d="M6 3v6M8 3v6" stroke="#8ca0aa" />
    </svg>
);

const Lens = ({ sign, fill = "#8cb4d2", glass = "#466e91" }: { sign: "+" | "-"; fill?: string; glass?: string }) => (
    <svg className="shrink-0" width="16" height="16" viewBox="0 0 16 16">
        <path d="M1 15l4-4" stroke={fill} strokeWidth="2.500" />
        <circle cx="9" cy="7" r="6" fill={glass} stroke={fill} strokeWidth="1.200" />
        <path d={sign === "+" ? "M5.500 7h7M9 3.500v7" : "M5.500 7h7"} stroke={glass === "#466e91" ? "#f5ffe1" : "#b4b4b4"} strokeWidth="2" />
    </svg>
);

/* ---------- toolbar ---------- */

function Tool({ className, children }: { className: string; children: ReactNode }) {
    return (
        <div className={`flex h-[19px] shrink-0 items-center gap-[4px] border border-[#37475a] bg-linear-to-b from-[#2c2c2c] to-[#0c0c0c] pl-[2px] text-[11.5px] tracking-[-0.2px] text-[#b4b4b4] ${className}`}>
            {children}
        </div>
    );
}

function ToolGroup() {
    return (
        <>
            <Tool className="mr-[2px] w-[55px]">
                <Share />
                Share
            </Tool>
            <Tool className="w-[19px] pl-px! from-black! to-black!">
                <Pour arrow />
            </Tool>
            <Tool className="w-[19px] pl-px! from-black! to-black!">
                <Wrench />
            </Tool>
            <Tool className="w-[36px] from-black! to-black!">
                <span className="flex h-[14px] w-[30px] items-center justify-center rounded-[3px] bg-linear-to-b from-[#b9c8d7] to-[#7d8ca0] text-[12px] font-bold text-[#28323c]">5m</span>
            </Tool>
            <Tool className="w-[48px]">
                <StyleIcon />
                Style
            </Tool>
            <Tool className="w-[73px]">
                <Pencil />
                Drawings
            </Tool>
            <Tool className="w-[60px] gap-[3px]">
                <Pour />
                Studies
            </Tool>
        </>
    );
}

function SymbolBox({ symbol }: { symbol: string }) {
    return (
        <>
            <div className="mr-[3px] h-[6px] w-[6px] rounded-full border-[1.5px] border-[#0a50a0]" />
            <div className="flex h-[17px] w-[116px] border border-[#46556e]">
                <div className="w-[99px] bg-linear-to-r from-[#8c8c8c] to-[#c8c8c8] pl-px text-[12px] leading-[16px] font-medium text-black">{symbol}</div>
                <div className="flex flex-1 items-center justify-center bg-black">
                    <svg width="10" height="12" viewBox="0 0 10 12">
                        <path d="M0 1h10L5 5.500zM0 7h10l-5 4.500z" fill="#0f5abe" />
                    </svg>
                </div>
            </div>
        </>
    );
}

function BottomBar({ crosshair, thumb, track }: { crosshair: boolean; thumb: string; track: string }) {
    return (
        <div className={`flex h-[20px] shrink-0 items-center ${crosshair ? "-ml-px" : "-ml-[2px]"}`}>
            <div className="flex h-[18px] w-[18px] items-center justify-center border border-[#37475a]">
                <svg width="14" height="14" viewBox="0 0 14 14">
                    <circle cx="7" cy="7" r="5" fill="none" stroke="#466482" strokeWidth="2.500" />
                    <path d="M0 7h14M7 0v14" stroke="#e6f0d2" strokeWidth="1.500" />
                </svg>
            </div>
            <div className={`flex h-[19px] w-[19px] items-center justify-center border ${crosshair ? "border-2 border-[#3c82eb]" : "border-[#37475a]"}`}>
                <Lens sign="+" />
            </div>
            <div className="flex h-[18px] w-[19px] items-center justify-center border border-[#37475a]">
                <Lens sign="-" fill={crosshair ? "#8cb4d2" : "#969696"} glass={crosshair ? "#466e91" : "#8c8c8c"} />
            </div>
            <div className="flex h-[18px] w-[19px] items-center justify-center border border-[#37475a]">
                <span className="h-[15px] w-[13px] border-b border-white text-center text-[12px] leading-[13px] font-bold text-[#a0c8e6]">$</span>
            </div>
            <div className="ml-[2px] flex h-[16px] w-[15px] items-center justify-center bg-[#232323]">
                <svg width="5" height="9" viewBox="0 0 5 9">
                    <path d="M5 0v9L0 4.500z" fill="#787878" />
                </svg>
            </div>
            <div className={`ml-px h-[16px] bg-linear-to-b from-[#0c0c0c] to-[#2d2d2d] ${track}`} />
            <div className={`ml-px h-[16px] bg-[repeating-linear-gradient(90deg,#0a2341_0_1px,#1e4678_1px_2px)] ${thumb}`} />
            <div className="ml-[2px] flex h-[16px] w-[15px] items-center justify-center bg-[#232323]">
                <svg width="5" height="9" viewBox="0 0 5 9">
                    <path d="M0 0v9l5-4.500z" fill="#787878" />
                </svg>
            </div>
            <div className="ml-px flex h-[18px] w-[19px] items-center justify-center border border-[#46556e]">
                <Fit />
            </div>
        </div>
    );
}

/* ---------- vertical tabs ---------- */

const TABS = [
    { label: "Trade", size: "mt-[3px] h-[39px]" },
    { label: "Times And Sales", size: "mt-[15px] h-[94px]" },
    { label: "Active Trader", size: "mt-[7px] h-[76px]" },
    { label: "Big Buttons", size: "mt-[7px] h-[67px]" },
    { label: "Chart", size: "mt-[7px] h-[38px]" },
    { label: "Dashboard", size: "mt-[15px] h-[66px]" },
    { label: "Level II", size: "mt-[6px] h-[46px]" },
    { label: "Live News", size: "mt-[7px] h-[62px]" },
];

function SideTabs({ active, notches }: { active: string[]; notches: string[] }) {
    return (
        <div className="relative flex w-[22px] shrink-0 flex-col items-center border-l border-[#5a5a5a] bg-[#333]">
            {TABS.map(({ label, size }) => (
                <div
                    key={label}
                    className={`flex w-[16px] shrink-0 items-center justify-center rounded-full border border-black bg-linear-to-r from-[#1c1c1c] to-[#3a3a3a] shadow-[0_0_1px_#777] ${size}`}
                >
                    <span
                        className={`rotate-180 text-[11.5px] leading-[14px] tracking-[-0.2px] whitespace-nowrap [writing-mode:vertical-rl] ${
                            active.includes(label) ? "text-[#ffc800]" : "text-[#afafaf]"
                        }`}
                    >
                        {label}
                    </span>
                </div>
            ))}
            {notches.map((n) => (
                <svg key={n} className={`absolute -left-px ${n}`} width="8" height="8" viewBox="0 0 8 8">
                    <path d="M0 0l8 4-8 4z" fill="#000" />
                </svg>
            ))}
        </div>
    );
}

/* ---------- top bar ---------- */

function TopBar() {
    const pill = "flex h-[19px] shrink-0 items-center justify-center rounded-full border border-[#5a6478] bg-linear-to-b from-[#5f5f5f] to-[#3a3a3a]";
    return (
        <div className="flex h-[25px] shrink-0 items-center overflow-hidden border-b border-black bg-[#323232] pt-[2px] text-[11px] text-[#b9b9b9]">
            <div className="ml-[7px] flex h-[18px] w-[68px] shrink-0 items-center gap-[4px] rounded-full bg-[#001428] pl-[9px] tracking-[-0.2px] text-[#ffc800]">
                <svg width="15" height="14" viewBox="0 0 15 14">
                    <path d="M3.500 3v11M10.500 0v11" stroke="#c85050" />
                    <rect x="1" y="5" width="5" height="6" rx="1" fill="#dc5a5a" />
                    <rect x="8.500" y="2" width="5" height="6" rx="1" fill="#1ec81e" />
                </svg>
                Charts
            </div>
            <div className="ml-[12px] flex w-[79px] items-center gap-[3px]">
                <svg width="17" height="16" viewBox="0 0 17 16">
                    <path d="M8.500 0L16.500 15H.5z" fill="#e68c1e" />
                    <path d="M2 14h13" stroke="#823c0a" strokeWidth="2" />
                    <ellipse cx="8.500" cy="9" rx="5" ry="3" fill="#fff" />
                    <circle cx="8.500" cy="9" r="2" fill="#1e3c6e" />
                </svg>
                Prophet
            </div>
            <div className="ml-px flex w-[98px] items-center gap-[3px] tracking-[-0.2px]">
                <svg width="15" height="16" viewBox="0 0 15 16" fill="#5a7896" stroke="#c8dceb">
                    <path d="M.5 1h5v5h-5zM.5 8h5v7h-5zM8 1h6v8H8zM8 11h6v4H8z" />
                </svg>
                Flexible Grid
            </div>
            <div className="ml-px flex items-center gap-[3px]">
                <svg width="16" height="16" viewBox="0 0 16 16">
                    <rect x=".5" y=".5" width="15" height="15" fill="#141e28" stroke="#8c8c6e" />
                    <path d="M1 8l4-4 4 6 6-6v4l-6 5-4-5-4 4z" fill="#e6be14" />
                    <path d="M1 12l4-3 4 4 6-4v6H1z" fill="#1e6e78" />
                </svg>
                Product Depth
            </div>
            <div className="ml-auto flex w-[266px] shrink-0 items-center text-[12px] tracking-[-0.3px] text-white">
                <div className="flex h-[19px] w-[54px] items-center border border-[#8c5a00] bg-black">
                    <svg width="52" height="17" viewBox="0 0 52 17">
                        <path d="M9.500 3.500h26v13h-26zM22.500 3.500v13" fill="none" stroke={GOLD} />
                        <path d="M52 9v8h-8z" fill={GOLD} />
                    </svg>
                </div>
                <div className={`ml-[4px] w-[25px] ${pill}`}>
                    <svg width="15" height="14" viewBox="0 0 15 14">
                        <path d="M7.500 0C4 1 5 6 3 8.500L.5 11h14L12 8.500C10 6 11 1 7.500 0zM5.500 12h4l-2 2z" fill="#d2d2d2" />
                    </svg>
                </div>
                <div className={`ml-[4px] w-[27px] ${pill}`}>
                    <svg width="17" height="9" viewBox="0 0 17 9">
                        <path d="M1 1.500h4L7 3.500h9.500v2H7L5 7.500H1L3.500 4.500z" fill="#d2d2d2" />
                    </svg>
                </div>
                <div className={`ml-[4px] w-[60px] ${pill}`}>Symbols</div>
                <div className={`ml-[4px] w-[21px] ${pill}`}>
                    <svg width="13" height="12" viewBox="0 0 13 12">
                        <path d="M3 0h7v3H3zM1 4h11v5h-2V7H3v2H1zM4 8h5v4H4z" fill="#c8c8c8" />
                    </svg>
                </div>
                <div className={`ml-[4px] w-[41px] ${pill}`}>Reset</div>
                <div className={`ml-[4px] w-[41px] justify-start! pl-[6px] ${pill}`}>
                    <svg width="12" height="12" viewBox="0 0 12 12">
                        <path d="M0 4h8v7H0z" fill="#828282" />
                        <path d="M4 0h8v8H4z" fill="#c8c8c8" />
                    </svg>
                </div>
            </div>
        </div>
    );
}

/* ---------- active trader ---------- */

const COLS = "grid grid-cols-[37px_51px_27px_37px_27px_51px]";

function ActiveTrader() {
    const btn = "flex shrink-0 items-center justify-center border text-[11.5px]";
    return (
        <div className="flex w-[251px] shrink-0 flex-col overflow-hidden border-l border-[#161616] text-[11.5px] tracking-[-0.1px] text-[#afafaf]">
            <div className="flex h-[59px] shrink-0">
                <svg className="mt-[27px] ml-px shrink-0" width="11" height="6" viewBox="0 0 11 6">
                    <path d="M0 0h11L5.500 6z" fill="#144b9b" />
                </svg>
                <div className="ml-[6px] pt-[3px]">
                    <div className="flex gap-[4px]">
                        <div className={`${btn} h-[22px] w-[65px] border-[#3c5a3c] bg-linear-to-b from-[#143214] to-[#1c1c1c] text-[#00e600]`}>Buy MKT</div>
                        <div className={`${btn} h-[22px] w-[63px] border-[#5f3c3c] bg-linear-to-b from-[#321414] to-[#1c1c1c] text-[#ff0000]`}>Sell MKT</div>
                    </div>
                    <div className="mt-[5px] flex gap-[4px]">
                        <div className={`${btn} h-[22px] w-[68px] border-[#46463c] bg-[#141414] text-[#6e6e6e]`}>Cancel...</div>
                        <div className={`${btn} h-[22px] w-[63px] border-[#37475a] bg-linear-to-b from-[#232323] to-[#0f0f0f]`}>Reverse</div>
                        <div className={`${btn} h-[22px] w-[54px] border-[#37475a] bg-linear-to-b from-[#232323] to-[#0f0f0f]`}>Flatten</div>
                    </div>
                </div>
                <svg className="mt-[22px] ml-[21px] shrink-0" width="17" height="9" viewBox="0 0 17 9">
                    <path d="M0 1.500h4l2 2h3v2H6l-2 2H0L2.500 4.500z" fill="#d2d2e1" />
                    <rect x="9" y="3" width="7" height="3" fill="#be6e14" />
                </svg>
            </div>

            {/* Quantity */}
            <div className="flex h-[26px] w-[249px] shrink-0 items-center overflow-hidden pl-[3px]">
                <svg className="shrink-0" width="13" height="13" viewBox="0 0 13 13">
                    <circle cx="6.500" cy="6" r="6" fill="#8cc8f0" />
                    <path d="M3 10l1 3 3-2z" fill="#8cc8f0" />
                    <path d="M4.500 4.500c0-3 4-2.500 4 0C8.500 6 6.500 6 6.500 7.500M6.500 8.500v1.500" stroke="#14283c" strokeWidth="1.300" fill="none" />
                </svg>
                <span className="ml-[3px] w-[24px] shrink-0 text-[#8c5a14]">Qty:</span>
                <div className="flex h-[18px] w-[75px] shrink-0 items-center justify-end border border-[#37475a] text-[#ffc800]">
                    <span className="pr-[4px]">+1</span>
                    <svg width="11" height="16" viewBox="0 0 11 16">
                        <rect width="11" height="16" fill="#191919" />
                        <path d="M2 6h7L5.500 2.500zM2 10h7l-3.500 3.500z" fill="#144bb4" />
                    </svg>
                </div>
                {["1", "3", "5", "10", "2"].map((q, i) => (
                    <div key={i} className={`flex h-[18px] shrink-0 items-center justify-center border-y border-r border-[#37475a] bg-[#121212] ${q === "10" ? "w-[34px]" : i === 4 ? "w-[28px] justify-start! pl-[9px]" : "w-[28px]"}`}>
                        {q}
                    </div>
                ))}
            </div>

            {/* Template */}
            <div className="mt-px flex h-[37px] shrink-0 items-start pl-[2px]">
                <span className="w-[50px] shrink-0 pt-px text-[#8c5a14]">Template:</span>
                <div className="flex h-[19px] w-[112px] shrink-0 items-end justify-between border border-[#8c5a00] pl-[2px] text-[#ffc800]">
                    Single
                    <svg width="8" height="8" viewBox="0 0 8 8">
                        <path d="M8 0v8H0z" fill={GOLD} />
                    </svg>
                </div>
                <div className="mt-[3px] ml-[4px] h-[13px] w-[13px] border border-[#555] bg-linear-to-br from-[#969696] to-[#e6e6e6]" />
                <span className="ml-[4px] pt-px">auto send</span>
            </div>

            {/* Position summary */}
            <div className="ml-[8px] grid shrink-0 grid-cols-[120px_121px]">
                <div className="h-[21px] border border-[#232323] bg-[#230000] pl-[3px] leading-[20px]">
                    P/L Open <span className="text-[#f00014]">($1,790.00)</span>
                </div>
                <div className="h-[21px] border border-l-0 border-[#232323] bg-[#230000] pl-[4px] leading-[20px]">
                    P/L Day <span className="text-[#f00014]">($1,710.00)</span>
                </div>
                <div className="col-span-2 flex h-[20px] items-center gap-[3px] bg-linear-to-b from-[#502828] to-[#230c0c] pl-[4px]">
                    Avg Price
                    <svg className="ml-px" width="4" height="7" viewBox="0 0 4 7">
                        <path d="M0 0l4 3.500L0 7z" fill="#ffb400" />
                    </svg>
                    <span className="-ml-[2px] text-[#d21e1e]">1116.7428571</span>
                    <svg width="4" height="7" viewBox="0 0 4 7">
                        <path d="M4 0L0 3.500 4 7z" fill="#ffb400" />
                    </svg>
                </div>
                <div className="h-[39px] border border-[#232323] pt-[2px] pl-[3px] leading-[16px]">
                    <div>B/S</div>
                    <div className="leading-[19px]">
                        <b className="text-[14px] text-[#00dc00]">2</b> by <b className="text-[14px] text-[#f00]">9</b>
                    </div>
                </div>
                <div className="h-[39px] border border-l-0 border-[#232323] bg-[#230000] pt-[2px] pl-[4px] leading-[16px]">
                    <div>Pos Short</div>
                    <b className="text-[14px] leading-[19px] text-[#f00]">-7</b>
                </div>
            </div>

            {/* Ladder */}
            <div className="flex flex-1 overflow-hidden pl-px">
                <div className="w-[230px] shrink-0">
                    <div className={`${COLS} h-[21px] bg-[#12161c] leading-[22px]`}>
                        {["Vo...", "Buy O...", "Bi...", "Price", "A...", "Sell Or..."].map((h, i) => (
                            <span key={h} className={`border-r border-black text-right whitespace-nowrap ${i === 3 ? "pr-[4px]" : i === 1 ? "pr-[3px]" : ""}`}>
                                {h}
                            </span>
                        ))}
                    </div>
                    {steps(0, 32, 1).map((r) => (
                        <div key={r} className={`${COLS} h-[21px] border-b border-[#2a2a2a] text-white`}>
                            <span className={`border-r border-[#1e1e1e] ${r > 12 && r < 21 ? "bg-[#3c1e00]" : ""}`} />
                            <span className="border-r border-[#1e1e1e]" />
                            <span className="border-r border-[#1e1e1e] bg-[#001900]" />
                            <span className="border-r border-[#1e1e1e] pl-[11px] text-[12px] leading-[23px] tracking-[0.2px]">{r < 4 || r > 24 ? "1..." : ""}</span>
                            <span className="border-r border-[#1e1e1e] bg-[#230000]" />
                            <span className="border-r border-[#1e1e1e]" />
                        </div>
                    ))}
                </div>
                <div className="ml-[2px] flex w-[16px] shrink-0 flex-col bg-linear-to-r from-black to-[#1e1e1e]">
                    <svg className="block shrink-0" width="15" height="45" viewBox="0 0 15 45">
                        <rect width="15" height="45" fill="#c8c8c8" />
                        <g fill="none" stroke="#1e1e1e" strokeWidth="1.500">
                            <circle cx="8" cy="7" r="5" />
                            <path d="M5.500 7h5M8 4.500v5M1 14l3-3" />
                            <circle cx="8" cy="37" r="5" />
                            <path d="M5.500 37h5M1 44l3-3" />
                            <path d="M4 22.500h8M5 17h6l-3 3.500zM5 28h6l-3-3.500z" strokeWidth="1" />
                        </g>
                    </svg>
                    <div className="mt-px flex h-[15px] items-center justify-center bg-[#232323]">
                        <svg width="8" height="5" viewBox="0 0 8 5">
                            <path d="M0 5h8L4 0z" fill="#969696" />
                        </svg>
                    </div>
                    <div className="mt-auto mb-px flex h-[16px] items-center justify-center border border-[#37475a] bg-[#232323]">
                        <svg width="8" height="5" viewBox="0 0 8 5">
                            <path d="M0 0h8L4 5z" fill="#969696" />
                        </svg>
                    </div>
                </div>
            </div>
        </div>
    );
}

/* ---------- page ---------- */

const gcInfo: Cell[] = [
    [70, "/GC 5 d 5m", "pl-[8px]! font-bold text-[#1eaa1e]"], [100, "D: 8/5/14 10:20 AM", "text-[#b9b9b9]"], [55, "O: 1284.8", "text-[#b9b9b9]"],
    [54, "H: 1284.9", "text-[#b9b9b9]"], [53, "L: 1283.6", "text-[#b9b9b9]"], [54, "C: 1284.1", "text-[#b9b9b9]"], [36, "R: 1.3", "text-[#b9b9b9]"],
    [430, "TS_MultiStops (3.0, 20, No, 3, 1.23, Average)", "text-white"],
];

const tfInfo: Cell[] = [
    [67, "/TF 5 d 5m", "pl-[8px]! font-bold text-[#1eaa1e]"], [100, "D: 8/5/14 10:20 AM", "text-[#b9b9b9]"], [55, "O: 1119.2", "text-[#b9b9b9]"],
    [45, "H: 1120", "text-[#b9b9b9]"], [53, "L: 1119.2", "text-[#b9b9b9]"], [54, "C: 1119.3", "text-[#b9b9b9]"], [36, "R: 0.8", "text-[#b9b9b9]"],
    [260, "TS_MultiStops (3.0, 20, No, 3, 1.23, Ave...", "text-white"],
];

const gcStudy: Cell[] = [
    [166, "LBR_SmartADX (14, 15.0, 30.0)", "pl-[7px]! text-[#1eff1e]"], [47, "43.3785", "text-[#1eff1e]"], [20, "15", "text-[#878787]"],
    [20, "30", "text-[#878787]"], [259, "tfpZLACD2 (12, 24, 9, 30, YES, 0.01, 14, 15.0, 30.0)", "pl-[2px]! text-[#ff0014]"],
    [51, "-74.2155", "text-[#ff0014]"], [45, "-61.274", "text-[#ffafaf]"], [47, "13.3785", "text-[#1eff1e]"], [24, "-15", "text-[#878787]"],
    [14, "0", "text-[#878787]"], [26, "N/A", "text-[#1eff1e]"], [26, "N/A", "text-[#878787]"],
];

const tfStudy: Cell[] = [
    [166, "LBR_SmartADX (14, 15.0, 30.0)", "pl-[7px]! text-[#ffff00]"], [35, "23.27", "text-[#ffff00]"], [20, "15", "text-[#878787]"],
    [20, "30", "text-[#878787]"], [259, "tfpZLACD2 (12, 24, 9, 30, YES, 0.01, 14, 15.0, 30.0)", "pl-[2px]! text-[#1eff1e]"],
    [47, "110.613", "text-[#1eff1e]"], [47, "80.6009", "text-[#ffafaf]"], [51, "-6.73001", "text-[#ffff00]"], [14, "...", "text-[#878787]"],
];

function TimeAxis({ x, labels }: { x: number; labels: [number, string][] }) {
    return (
        <svg className="block shrink-0" width="700" height="15" viewBox={`${x} 933 700 15`} overflow="visible">
            <g fill={AXIS} fontSize="11.5" letterSpacing="-0.2">
                {labels.map(([lx, t]) => (
                    <text key={lx} x={lx} y="946">
                        {t}
                    </text>
                ))}
            </g>
        </svg>
    );
}

const CurveButton = () => (
    <div className="flex h-[19px] w-[19px] items-center justify-center border border-[#37475a] bg-black">
        <svg width="15" height="15" viewBox="0 0 15 15">
            <path d="M1 1.500h13M1 13.500h13" stroke="#e6f0d2" />
            <path d="M2 10.500h1.500c6 0 2-6.500 8-6.500H13" stroke="#8cb4d2" strokeWidth="1.800" fill="none" />
        </svg>
    </div>
);

export default function App() {
    return (
        <div className="relative flex h-[972px] w-[1912px] flex-col overflow-hidden bg-black font-['Liberation_Sans',Arial,sans-serif] leading-normal">
            <TopBar />

            <div className="flex h-[945px] shrink-0">
                {/* Gold */}
                <section className="flex w-[922px] shrink-0 flex-col border-l border-[#373737] pt-[2px]">
                    <div className="ml-[2px] flex h-[25px] w-[917px] shrink-0 items-center bg-linear-to-b from-[#303030] to-[#0f0f0f]">
                        <div className="flex w-[513px] shrink-0 items-center pl-px">
                            <SymbolBox symbol="/GC" />
                            <span className="ml-px flex h-[14px] w-[14px] items-center justify-center bg-[#f00000] text-[11px] text-black">1</span>
                            <span className="ml-[2px] text-[11px] tracking-[-0.25px] text-[#96640f]">Gold Futures, ETH (DEC 14)</span>
                        </div>
                        <ToolGroup />
                        <b className="ml-[2px] w-[57px] shrink-0 text-[14px] text-[#00e600]">1284.10</b>
                        <div className="text-[9.500px] leading-[10px] whitespace-nowrap text-[#e60000]">
                            <div>-4.80</div>
                            <div>-0.37 %</div>
                        </div>
                    </div>
                    <div className="flex h-[917px] shrink-0">
                        <div className="ml-[4px] flex w-[893px] shrink-0 flex-col">
                            <div className="flex">
                                <InfoRow cells={gcInfo} className="w-[842px]" />
                                <div className="ml-[2px]">
                                    <CurveButton />
                                </div>
                            </div>
                            <div className="relative">
                                <GoldPrice />
                                <GoldTags />
                            </div>
                            <Splitter className="h-[7px] w-[842px]" />
                            <InfoRow cells={[[48, "Volume", "pl-[8px]! text-[#b9b9b9]"], [26, "622", "text-[#b9b9b9]"]]} className="w-[842px]" />
                            <GoldVolume />
                            <Splitter className="h-[7px] w-[842px]" />
                            <InfoRow cells={gcStudy} className="w-[842px]" />
                            <GoldStudy />
                            <TimeAxis x={5} labels={[[152, "Fri"], [359, "Sun"], [430, "Mon"], [709, "Tue"]]} />
                            <BottomBar crosshair={false} track="w-[344px]" thumb="w-[421px]" />
                        </div>
                        <SideTabs active={["Chart"]} notches={["top-[46px]", "top-[357px]"]} />
                    </div>
                </section>

                {/* Russell */}
                <section className="flex w-[990px] shrink-0 flex-col overflow-hidden border-2 border-r-0 border-[#0078ff]">
                    <div className="flex h-[25px] shrink-0 items-center bg-linear-to-b from-[#0a3c78] to-[#051e41] pl-[2px]">
                        <div className="flex w-[522px] shrink-0 items-center">
                            <SymbolBox symbol="/TF" />
                            <svg className="ml-[2px]" width="13" height="13" viewBox="0 0 13 13">
                                <path d="M6 6h6v6H6z" fill="#0000e6" stroke="#000" />
                                <path d="M3.500 3.500h6v6h-6z" fill="#ffff00" stroke="#000" />
                                <path d="M.5.500h6v6h-6z" fill="#ff0000" stroke="#000" />
                            </svg>
                            <span className="ml-[2px] text-[11px] tracking-[-0.15px] text-[#96640f]">Russell 2000 Index Mini (SEP 14)</span>
                        </div>
                        <ToolGroup />
                        <span className="ml-[5px] w-[61px] shrink-0 text-[11px] tracking-[-0.15px] text-[#96640f]">Net Pos: -7</span>
                        <b className="w-[57px] shrink-0 text-[14px] text-[#ff0014]">1119.30</b>
                        <div className="text-[9.500px] leading-[10px] whitespace-nowrap text-[#e60000]">
                            <div>-.70</div>
                            <div>-0.06 %</div>
                        </div>
                    </div>
                    <div className="flex h-[916px] shrink-0">
                        <div className="ml-[3px] flex w-[708px] shrink-0 flex-col">
                            <div className="flex">
                                <InfoRow cells={tfInfo} className="w-[658px]" />
                                <div className="ml-[3px]">
                                    <CurveButton />
                                </div>
                            </div>
                            <div className="relative">
                                <RussellPrice />
                                <RussellTags />
                            </div>
                            <Splitter className="h-[7px] w-[658px]" />
                            <InfoRow cells={[[48, "Volume", "pl-[8px]! text-[#b9b9b9]"], [26, "420", "text-[#b9b9b9]"]]} className="w-[658px]" />
                            <RussellVolume />
                            <Splitter className="h-[7px] w-[658px]" />
                            <InfoRow cells={tfStudy} className="w-[658px]" />
                            <RussellStudy />
                            <TimeAxis
                                x={927}
                                labels={TF_COLS.map((cx, i) => [cx, ["21", "22", "23", "Tue", "1", "2", "3", "4", "5", "6", "7", "8", "9", "10", "11"][i]] as [number, string])}
                            />
                            <BottomBar crosshair track="w-[515px]" thumb="w-[64px]" />
                        </div>
                        <div className="mr-[2px] ml-[5px] w-[3px] shrink-0 bg-[repeating-conic-gradient(#5a5a5a_0_25%,#000_0_50%)] bg-[length:3px_4px]" />
                        <ActiveTrader />
                        <SideTabs active={["Active Trader", "Chart"]} notches={["top-[46px]"]} />
                    </div>
                </section>
            </div>

            {/* Status strip */}
            <div className="h-[2px] shrink-0 bg-[#2d2d2d]" />
            <div className="absolute bottom-0 left-0 h-[27px] w-[14px] border border-[#4b4b4b] bg-[#111]">
                <svg className="mt-[9px]" width="12" height="12" viewBox="0 0 12 12">
                    <path d="M.5 1h10v10H.5z" fill="none" stroke="#c8c8c8" />
                    <path d="M2 3l5 3-5 3z" fill="#c8c8c8" />
                    <path d="M8.500 3v6" stroke="#c8c8c8" strokeWidth="1.500" />
                </svg>
            </div>
            <svg className="absolute bottom-0 left-[36px]" width="27" height="4" viewBox="0 0 27 4">
                <path d="M0 4l3-4h21l3 4z" fill="#2d2d2d" />
                <path d="M11 4l2.500-2.500L16 4" stroke={GOLD} fill="none" />
            </svg>

            {/* Notes */}
            <svg className="absolute top-[170px] left-[730px] drop-shadow-[2px_3px_2px_rgba(0,0,0,0.6)]" width="120" height="160" viewBox="730 170 120 160">
                <path d="M749.500 181.500L767.500 191 763 194 832.500 312.500a5 5 0 0 1-9 5.500L756 198l-5 3.500z" fill="#ff0000" />
            </svg>
            <div className="absolute top-[49px] left-[584px] h-[131px] w-[274px] rounded-[8px] border-[6px] border-[#ff0000] bg-white pt-[7px] pl-[12px] text-[26px] leading-[30px] text-[#4b0082] shadow-[2px_3px_4px_rgba(0,0,0,0.7)]">
                missed short in GC
            </div>
            <div className="absolute top-[368px] left-[1650px] h-[442px] w-[249px] rounded-[8px] border-[6px] border-[#ff0000] bg-white pt-[7px] pl-[12px] text-[26px] leading-[30px] text-[#4b0082] shadow-[2px_3px_4px_rgba(0,0,0,0.7)]">
                My habit of not
                <br />
                covering some at
                <br />
                ORL- gets me in
                <br />
                trouble. Staying
                <br />
                put on shorts.
            </div>
        </div>
    );
}
